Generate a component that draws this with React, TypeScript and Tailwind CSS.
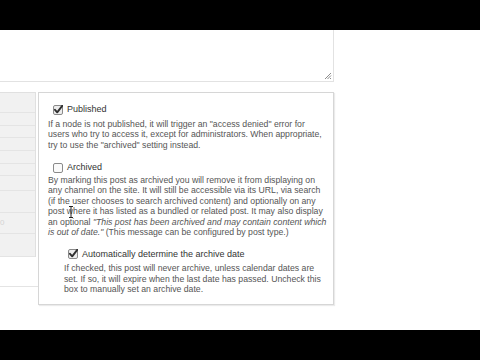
import React from "react";

const font = { fontFamily: '"Liberation Sans", Arial, sans-serif' };

function Check({ checked }: { checked: boolean }) {
  return (
    <svg width="10" height="10" viewBox="0 0 10 10" className="shrink-0">
      <rect x="0.5" y="0.5" width="9" height="9" rx="1.5" fill={checked ? "#ececec" : "#fafafa"} stroke="#8a8a8a" />
      {checked && <path d="M2 4.8 L4.2 7.3 L9.2 0.8" fill="none" stroke="#2f2f2f" strokeWidth="1.9" strokeLinecap="round" strokeLinejoin="round" />}
    </svg>
  );
}

function Lines({ lines, lh }: { lines: React.ReactNode[]; lh: string }) {
  return (
    <div className={`text-[8.7px] text-[#555] ${lh}`}>
      {lines.map((l, i) => (
        <div key={i} className="whitespace-nowrap">{l}</div>
      ))}
    </div>
  );
}

export default function App() {
  const rows = [20, 13, 12, 13, 13, 12, 15, 22, 21, 23];
  return (
    <div className="w-[480px] h-[360px] bg-white flex flex-col overflow-hidden" style={font}>
      <div className="h-[30px] bg-black shrink-0" />
      <div className="h-[300px] flex flex-col">
        <div className="relative h-[52px] w-[334px] border-r border-b border-[#e2e2e2]">
          <svg className="absolute right-[1px] bottom-[1px]" width="8" height="8" viewBox="0 0 8 8">
            <path d="M1 7 L7 1 M3.5 7 L7 3.5 M6 7 L7 6" stroke="#8c8c8c" strokeWidth="1" />
          </svg>
        </div>
        <div className="h-[10px]" />
        <div className="flex">
          <div className="w-[36px] flex flex-col">
            <div className="bg-[#f1f1f1] border-t border-r border-[#e0e0e0] flex flex-col">
              {rows.map((h, i) => (
                <div key={i} className="border-b border-[#e4e4e4] flex items-center overflow-hidden" style={{ height: h }}>
                  {i === 8 && <span className="text-[8px] leading-none text-[#d4d4d4]">0</span>}
                </div>
              ))}
            </div>
            <div className="h-[29px]" />
            <div className="border-b border-[#e4e4e4] w-[38px]" />
          </div>
          <div className="w-[2px]" />
          <div className="relative w-[296px] h-[213px] border border-[#d6d6d6] shadow-[1px_1px_1px_rgba(0,0,0,0.08)] pl-[9px] pt-[11px]">
            <div className="flex items-center gap-[4px] h-[12px] pl-[5px] text-[9px] text-[#333]">
              <Check checked />
              <span>Published</span>
            </div>
            <div className="mt-[3px]">
              <Lines
                lh="leading-[10.3px]"
                lines={[
                  'If a node is not published, it will trigger an "access denied" error for',
                  'users who try to access it, except for administrators. When appropriate,',
                  'try to use the "archived" setting instead.',
                ]}
              />
            </div>
            <div className="mt-[12px] flex items-center gap-[4px] h-[12px] pl-[5px] text-[9px] text-[#333]">
              <Check checked={false} />
              <span>Archived</span>
            </div>
            <div className="mt-[1px]">
              <Lines
                lh="leading-[10.4px]"
                lines={[
                  "By marking this post as archived you will remove it from displaying on",
                  "any channel on the site. It will still be accessible via its URL, via search",
                  "(if the user chooses to search archived content) and optionally on any",
                  "post where it has listed as a bundled or related post. It may also display",
                  <>an optional <i>"This post has been archived and may contain content which</i></>,
                  <><i>is out of date."</i> (This message can be configured by post type.)</>,
                ]}
              />
            </div>
            <div className="pl-[16px]">
              <div className="mt-[11px] flex items-center gap-[4px] h-[12px] pl-[4px] text-[9px] text-[#333]">
                <Check checked />
                <span>Automatically determine the archive date</span>
              </div>
              <div className="mt-[3px]">
                <Lines
                  lh="leading-[10.5px]"
                  lines={[
                    "If checked, this post will never archive, unless calendar dates are",
                    "set. If so, it will expire when the last date has passed. Uncheck this",
                    "box to manually set an archive date.",
                  ]}
                />
              </div>
            </div>
            <svg className="absolute left-[29px] top-[113px]" width="6" height="12" viewBox="0 0 6 12">
              <path d="M1 0.5 H5 M3 0.5 V11.5 M1 11.5 H5" stroke="#222" strokeWidth="1" fill="none" />
            </svg>
          </div>
        </div>
      </div>
      <div className="flex-1 bg-black" />
    </div>
  );
}
